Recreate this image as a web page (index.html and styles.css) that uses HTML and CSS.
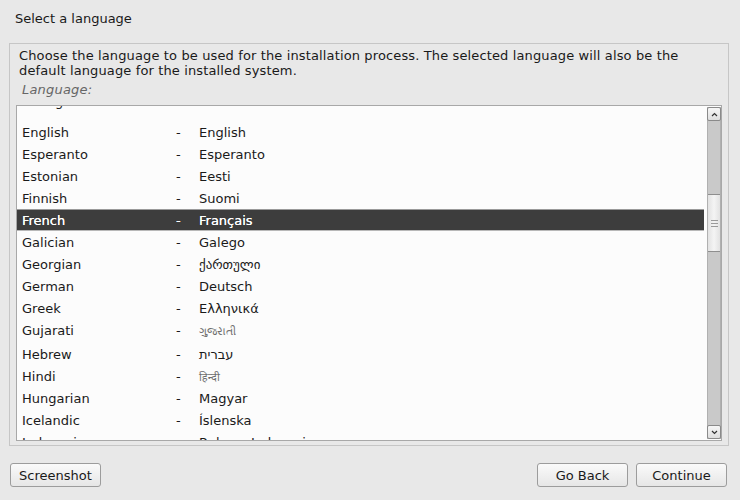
FILE: index.html
```html
<!DOCTYPE html>
<html>
<head>
<meta charset="utf-8">
<link rel="stylesheet" href="styles.css">
</head>
<body>
<div class="header">Select a language</div>
<div class="frame">
  <p class="desc">Choose the language to be used for the installation process. The selected language will also be the default language for the installed system.</p>
  <div class="label">Language:</div>
  <div class="listbox">
    <div class="viewport">
      <div class="rows">
        <div class="row tall"><span class="name">Dzongkha</span><span class="dash">-</span><span class="native">རྫོང་ཁ</span></div>
        <div class="row"><span class="name">English</span><span class="dash">-</span><span class="native">English</span></div>
        <div class="row"><span class="name">Esperanto</span><span class="dash">-</span><span class="native">Esperanto</span></div>
        <div class="row"><span class="name">Estonian</span><span class="dash">-</span><span class="native">Eesti</span></div>
        <div class="row"><span class="name">Finnish</span><span class="dash">-</span><span class="native">Suomi</span></div>
        <div class="row selected"><span class="name">French</span><span class="dash">-</span><span class="native">Français</span></div>
        <div class="row"><span class="name">Galician</span><span class="dash">-</span><span class="native">Galego</span></div>
        <div class="row"><span class="name">Georgian</span><span class="dash">-</span><span class="native">ქართული</span></div>
        <div class="row"><span class="name">German</span><span class="dash">-</span><span class="native">Deutsch</span></div>
        <div class="row"><span class="name">Greek</span><span class="dash">-</span><span class="native">Ελληνικά</span></div>
        <div class="row gu"><span class="name">Gujarati</span><span class="dash">-</span><span class="native thin">ગુજરાતી</span></div>
        <div class="row"><span class="name">Hebrew</span><span class="dash">-</span><span class="native">עברית</span></div>
        <div class="row"><span class="name">Hindi</span><span class="dash">-</span><span class="native thin">हिन्दी</span></div>
        <div class="row"><span class="name">Hungarian</span><span class="dash">-</span><span class="native">Magyar</span></div>
        <div class="row"><span class="name">Icelandic</span><span class="dash">-</span><span class="native">Íslenska</span></div>
        <div class="row"><span class="name">Indonesian</span><span class="dash">-</span><span class="native">Bahasa Indonesia</span></div>
      </div>
    </div>
    <div class="scrollbar">
      <div class="arrow up"><svg width="7" height="5" viewBox="0 0 7 5"><path d="M1 4 L3.5 1.5 L6 4" fill="none" stroke="#333" stroke-width="1.2"/></svg></div>
      <div class="trough">
        <div class="gap-top"></div>
        <div class="slider"><span class="grip"></span><span class="grip"></span><span class="grip"></span></div>
      </div>
      <div class="arrow down"><svg width="7" height="5" viewBox="0 0 7 5"><path d="M1 1 L3.5 3.5 L6 1" fill="none" stroke="#333" stroke-width="1.2"/></svg></div>
    </div>
  </div>
</div>
<div class="footer">
  <button class="btn">Screenshot</button>
  <div class="right">
    <button class="btn">Go Back</button>
    <button class="btn">Continue</button>
  </div>
</div>
</body>
</html>
```
FILE: styles.css
```css
html, body {
  margin: 0;
  padding: 0;
  background: #e8e8e8;
}
body {
  font-family: "DejaVu Sans", sans-serif;
  font-size: 13px;
  color: #1a1a1a;
  width: 740px;
  height: 500px;
  overflow: hidden;
}
.header {
  height: 43px;
  box-sizing: border-box;
  padding: 11px 0 0 15px;
  line-height: 15px;
}
.frame {
  margin: 0 11px 0 9px;
  border: 1px solid #c6c6c6;
  padding: 4px 6px 0 6px;
  height: 403px;
  box-sizing: border-box;
}
.desc {
  margin: 0 0 0 3px;
  line-height: 15px;
  letter-spacing: 0.13px;
}
.label {
  margin: 4px 0 7px 6px;
  line-height: 16px;
  font-style: italic;
  color: #666666;
  letter-spacing: 0.2px;
}
.listbox {
  display: flex;
  border: 1px solid #a8a8a8;
  background: #fcfcfc;
  height: 336px;
  box-sizing: border-box;
}
.viewport {
  flex: 1;
  overflow: hidden;
}
.rows {
  margin-top: -17px;
}
.row {
  display: flex;
  align-items: center;
  height: 22px;
  box-sizing: border-box;
}
.row.tall {
  height: 24px;
  margin-bottom: 8px;
}
.row.gu {
  height: 24px;
  padding-bottom: 2px;
}
.name {
  width: 154px;
  padding-left: 5px;
}
.dash {
  width: 23px;
}
.native {
  white-space: nowrap;
}
.native.thin {
  color: #6e6e6e;
  font-family: "Noto Sans", "DejaVu Sans", sans-serif;
  font-weight: normal;
  font-size: 11px;
}
.row.selected {
  background: #3d3d3d;
  color: #ffffff;
  border-top: 1px solid #9a9a9a;
  border-bottom: 1px solid #b8b8b8;
  margin-right: 3px;
  text-shadow: 0 0 0.4px #fff;
}
.scrollbar {
  width: 14px;
  margin: 1px 0 1px 0;
  display: flex;
  flex-direction: column;
  background: #c9c9c9;
  border-left: 1px solid #b0b0b0;
  border-right: 1px solid #b0b0b0;
  box-sizing: border-box;
}
.arrow {
  height: 14px;
  background: linear-gradient(#f6f6f6, #dedede);
  border: 1px solid #8a8a8a;
  border-radius: 2px;
  display: flex;
  align-items: center;
  justify-content: center;
  box-sizing: border-box;
  margin: 0 -1px;
}
.trough {
  flex: 1;
  display: flex;
  flex-direction: column;
}
.gap-top {
  height: 73px;
}
.slider {
  height: 58px;
  background: linear-gradient(90deg, #e2e2e2, #f4f4f4 50%, #e2e2e2);
  border-top: 1px solid #8e8e8e;
  border-bottom: 1px solid #8e8e8e;
  box-sizing: border-box;
  display: flex;
  flex-direction: column;
  align-items: center;
  justify-content: center;
  gap: 2px;
}
.grip {
  display: block;
  width: 7px;
  height: 1px;
  background: #9a9a9a;
}
.footer {
  display: flex;
  justify-content: space-between;
  padding: 17px 13px 0 10px;
}
.right {
  display: flex;
  gap: 8px;
}
.btn {
  width: 91px;
  height: 24px;
  font-family: "DejaVu Sans", sans-serif;
  font-size: 13px;
  color: #1a1a1a;
  background: linear-gradient(#fafafa, #e6e6e6);
  border: 1px solid #9c9c9c;
  border-radius: 3px;
  padding: 0;
}
```
